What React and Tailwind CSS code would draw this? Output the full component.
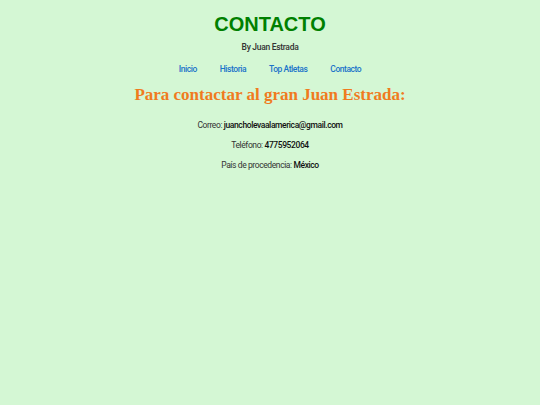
import React from 'react';

export default function App() {
    const links = ['Inicio', 'Historia', 'Top Atletas', 'Contacto'];

    return (
        <div className="min-h-[405px] bg-[#d4f7d4] font-['Roboto'] text-[#333] text-center">
            <header className="pt-[11px]">
                <h1 className="font-['Liberation_Sans'] font-bold text-[20px] leading-[26px] text-[#008000]">CONTACTO</h1>
                <p className="mt-[5px] text-[8.5px] leading-[10px] font-medium tracking-[-0.3px] text-[#333]">By Juan Estrada</p>
                <nav className="mt-[12px] flex justify-center gap-[23px] text-[8.5px] leading-[10px] font-medium tracking-[-0.45px]">
                    {links.map((l) => (
                        <a key={l} href="#" className="text-[#1a73c9]">{l}</a>
                    ))}
                </nav>
            </header>
            <main className="mt-[10px]">
                <h2 className="font-['Liberation_Serif'] font-bold text-[17px] leading-[22px] text-[#f07b1e]">
                    Para contactar al gran Juan Estrada:
                </h2>
                <div className="mt-[14px] flex flex-col gap-[10px] text-[8.5px] leading-[10px] tracking-[-0.4px]">
                    <p>Correo: <strong className="font-medium text-[#111]">juancholevaalamerica@gmail.com</strong></p>
                    <p>Teléfono: <strong className="font-medium text-[#111]">4775952064</strong></p>
                    <p>País de procedencia: <strong className="font-medium text-[#111]">México</strong></p>
                </div>
            </main>
        </div>
    );
}
